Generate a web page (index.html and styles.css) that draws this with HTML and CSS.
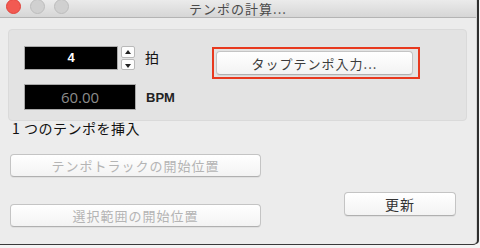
FILE: index.html
```html
<!DOCTYPE html>
<html lang="ja">
<head>
<meta charset="utf-8">
<link rel="stylesheet" href="styles.css">
</head>
<body>
<div class="window">
  <div class="titlebar">
    <div class="lights">
      <span class="light red"></span>
      <span class="light"></span>
      <span class="light"></span>
    </div>
    <div class="title">テンポの計算...</div>
  </div>
  <div class="content">
    <div class="group">
      <div class="fields">
        <div class="row">
          <div class="field beats">4</div>
          <div class="stepper">
            <span class="step up"></span>
            <span class="step down"></span>
          </div>
          <span class="label beat-label">拍</span>
        </div>
        <div class="row row2">
          <div class="field bpm">60.00</div>
          <span class="label bpm-label">BPM</span>
        </div>
      </div>
      <div class="highlight">
        <button class="btn tap">タップテンポ入力...</button>
      </div>
    </div>
    <div class="insert">1 つのテンポを挿入</div>
    <div class="bottom">
      <div class="left">
        <button class="btn wide disabled">テンポトラックの開始位置</button>
        <button class="btn wide disabled">選択範囲の開始位置</button>
      </div>
      <button class="btn update">更新</button>
    </div>
  </div>
</div>
</body>
</html>
```
FILE: styles.css
```css
html, body {
  margin: 0;
  padding: 0;
  width: 480px;
  height: 248px;
  background: #f4f4f4;
  overflow: hidden;
  font-family: "Noto Sans CJK JP", "Noto Sans", sans-serif;
}
.window {
  width: 476px;
  height: 244px;
  background: #ececec;
  border-right: 1px solid #d4d4d4;
  box-shadow: 2px 0 0 #2e2e2e, 0 1px 0 #3a3a3a;
  border-bottom-right-radius: 4px;
  display: flex;
  flex-direction: column;
}
.titlebar {
  height: 17px;
  border-bottom: 1px solid #b4b4b4;
  background: linear-gradient(#ebebeb, #d6d6d6);
  position: relative;
  display: flex;
  align-items: center;
  justify-content: center;
}
.lights {
  position: absolute;
  left: 6px;
  top: -1px;
  display: flex;
  gap: 9px;
}
.light {
  width: 15px;
  height: 15px;
  border-radius: 50%;
  background: #d0d0d0;
  border: 1px solid #bdbdbd;
  box-sizing: border-box;
}
.light.red {
  background: #f25a52;
  border-color: #e0443c;
}
.title {
  font-size: 13px;
  letter-spacing: 1px;
  color: #4a4a4a;
  line-height: 17px;
  margin-top: -1px;
}
.content {
  flex: 1;
  display: flex;
  flex-direction: column;
  padding: 11px 9px 0 8px;
}
.group {
  height: 92px;
  box-sizing: border-box;
  background: #e3e3e3;
  border: 1px solid #dadada;
  border-radius: 4px;
  display: flex;
  padding: 16px 0 0 15px;
}
.fields {
  width: 188px;
  display: flex;
  flex-direction: column;
}
.row {
  display: flex;
  align-items: center;
}
.row2 {
  margin-top: 14px;
}
.field {
  box-sizing: border-box;
  background: #000;
  border: 1px solid #a9a9a9;
  color: #fff;
  font-family: "Liberation Sans", "Noto Sans", sans-serif;
  font-size: 13px;
  font-weight: bold;
  text-align: center;
}
.beats {
  width: 94px;
  height: 24px;
  line-height: 22px;
}
.bpm {
  width: 112px;
  height: 26px;
  line-height: 24px;
  color: #8c8c8c;
  font-size: 15px;
  font-weight: normal;
  font-family: "Open Sans", "Noto Sans", sans-serif;
}
.stepper {
  margin-left: 3px;
  width: 14px;
  height: 24px;
  display: flex;
  flex-direction: column;
  gap: 1px;
}
.step {
  flex: 1;
  background: #fdfdfd;
  border: 1px solid #b9b9b9;
  border-radius: 2px;
  position: relative;
}
.step::after {
  content: "";
  position: absolute;
  left: 3px;
  top: 3px;
  border-left: 3.5px solid transparent;
  border-right: 3.5px solid transparent;
}
.up::after {
  border-bottom: 4px solid #222;
}
.down::after {
  border-top: 4px solid #222;
  top: 4px;
}
.label {
  font-size: 14px;
  color: #111;
}
.beat-label {
  margin-left: 10px;
  margin-top: -2px;
}
.bpm-label {
  margin-left: 10px;
  font-family: "Liberation Sans", sans-serif;
  font-weight: bold;
  font-size: 13px;
  color: #222;
}
.highlight {
  margin-top: 1px;
  width: 208px;
  height: 32px;
  box-sizing: border-box;
  border: 2px solid #e8391e;
  padding: 2px 5px 2px 2px;
  display: flex;
}
.btn {
  font-family: "Noto Sans CJK JP", "Noto Sans", sans-serif;
  font-size: 13px;
  letter-spacing: 1px;
  color: #333;
  background: linear-gradient(#ffffff, #f3f3f3);
  border: 1px solid #c4c4c4;
  border-bottom-color: #b0b0b0;
  border-radius: 4px;
  padding: 0;
  box-sizing: border-box;
  box-shadow: 0 1px 0 rgba(0,0,0,0.05);
}
.tap {
  flex: 1;
  height: 24px;
  color: #3c3c3c;
}
.insert {
  font-size: 14px;
  line-height: 16px;
  margin: 0 0 0 4px;
  height: 16px;
  color: #111;
  letter-spacing: 0.5px;
  margin-top: -1px;
}
.bottom {
  display: flex;
  padding-left: 2px;
  margin-top: 18px;
}
.left {
  display: flex;
  flex-direction: column;
  gap: 27px;
}
.wide {
  width: 251px;
  height: 23px;
}
.disabled {
  color: #b4b4b4;
}
.update {
  width: 112px;
  height: 24px;
  margin-left: 83px;
  margin-top: 38px;
  font-size: 14px;
  color: #333;
}
```
